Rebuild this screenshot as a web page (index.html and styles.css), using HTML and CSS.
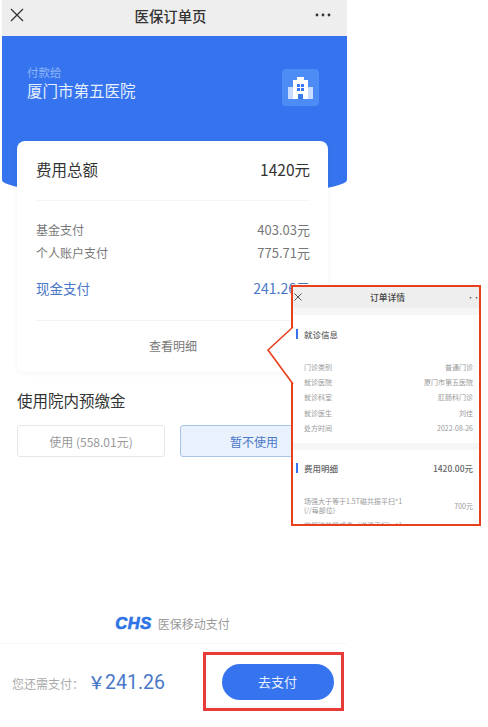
FILE: index.html
```html
<!DOCTYPE html>
<html lang="zh">
<head>
<meta charset="utf-8">
<title>医保订单页</title>
<link rel="stylesheet" href="styles.css">
</head>
<body>
<div class="stage">
  <main class="phone">
    <header class="nav">
      <svg class="nav-close" width="14" height="14" viewBox="0 0 14 14"><path d="M1 1l12 12M13 1L1 13" stroke="#333" stroke-width="1.3" fill="none"/></svg>
      <h1 class="nav-title">医保订单页</h1>
      <svg class="nav-more" width="16" height="4" viewBox="0 0 16 4"><circle cx="2" cy="2" r="1.4" fill="#333"/><circle cx="8" cy="2" r="1.4" fill="#333"/><circle cx="14" cy="2" r="1.4" fill="#333"/></svg>
    </header>
    <section class="hero">
      <div class="payee">
        <div class="payee-label">付款给</div>
        <div class="payee-name">厦门市第五医院</div>
      </div>
      <div class="hospital-tile">
        <svg width="25" height="22" viewBox="0 0 25 22"><path d="M0 10h5v12H0zM20 10h5v12h-5z" fill="#c9dcff"/><path d="M5 3h4V0h7v3h4v19H5z" fill="#fff"/><path d="M9 7h3v3H9zM13 7h3v3h-3zM9 11h3v3H9zM13 11h3v3h-3zM10 17h5v5h-5z" fill="#3a78ee"/></svg>
      </div>
    </section>
    <section class="card">
      <div class="total-row">
        <span>费用总额</span>
        <span>1420元</span>
      </div>
      <div class="breakdown">
        <div class="line"><span>基金支付</span><span class="line-value">403.03元</span></div>
        <div class="line"><span>个人账户支付</span><span class="line-value">775.71元</span></div>
        <div class="line line-cash"><span>现金支付</span><span class="cash-value">241.26元</span></div>
      </div>
      <div class="details-link">查看明细</div>
    </section>
    <section class="prepay">
      <h2 class="prepay-title">使用院内预缴金</h2>
      <div class="prepay-options">
        <div class="option">使用 (558.01元)</div>
        <div class="option option-active">暂不使用</div>
      </div>
    </section>
    <div class="brand">
      <span class="brand-logo">CHS</span>
      <span class="brand-text">医保移动支付</span>
    </div>
    <footer class="paybar">
      <span class="due-label">您还需支付：</span>
      <span class="due-amount"><span class="due-yen">￥</span>241.26</span>
      <div class="pay-highlight"><div class="pay-btn">去支付</div></div>
    </footer>
  </main>

  <aside class="inset">
    <div class="inset-nav">
      <svg class="inset-close" width="8" height="8" viewBox="0 0 8 8"><path d="M.5.5l7 7M7.500.5l-7 7" stroke="#444" stroke-width=".9" fill="none"/></svg>
      <span class="inset-title">订单详情</span>
      <span class="inset-more">••</span>
    </div>
    <div class="inset-section">
      <div class="inset-head"><span>就诊信息</span></div>
      <div class="inset-rows">
        <div class="inset-row"><span>门诊类别</span><span>普通门诊</span></div>
        <div class="inset-row"><span>就诊医院</span><span>厦门市第五医院</span></div>
        <div class="inset-row"><span>就诊科室</span><span>肛肠科门诊</span></div>
        <div class="inset-row"><span>就诊医生</span><span>刘佳</span></div>
        <div class="inset-row"><span>处方时间</span><span>2022-08-26</span></div>
      </div>
    </div>
    <div class="inset-section">
      <div class="inset-head inset-head-fees"><span>费用明细</span><span class="inset-sum">1420.00元</span></div>
      <div class="inset-item"><span>场强大于等于1.5T磁共振平扫*1<br>(//每部位)</span><span>700元</span></div>
      <div class="inset-cut">常规磁共振成像（增强平扫）*1</div>
    </div>
  </aside>
  <svg class="pointer" width="30" height="62" viewBox="0 0 30 62"><path d="M28 1L3 24l25 34" fill="#fff" stroke="#e8401c" stroke-width="1.6"/></svg>
</div>
</body>
</html>
```
FILE: styles.css
```css
* { box-sizing: border-box; }
html, body { margin: 0; padding: 0; background: #fff; }
body { font-family: "Noto Sans CJK SC", "Noto Sans", sans-serif; }
h1, h2 { margin: 0; font-weight: 500; }

.stage { position: relative; width: 488px; height: 727px; overflow: hidden; }
.phone { width: 345px; height: 727px; margin-left: 2px; display: flex; flex-direction: column; }

.nav { height: 36px; flex: none; display: flex; align-items: center; justify-content: space-between; padding: 0 16px 6px 8px; background: #eeeeee; }
.nav-title { font-size: 14.400px; margin-left: 2px; color: #333; }

.hero { height: 161px; flex: none; display: flex; justify-content: space-between; padding: 28px 28px 0 25px; background: #3574ee; border-radius: 0 0 172.5px 172.5px / 0 0 17px 17px; }
.payee-label { font-size: 11.500px; line-height: 16px; color: #8fb4f6; }
.payee-name { font-size: 15.500px; line-height: 21px; color: #e6effd; }
.hospital-tile { width: 37px; height: 37px; margin-top: 5px; display: flex; align-items: center; justify-content: center; border-radius: 4px; background: #4d8bf5; }

.card { flex: none; height: 231px; margin: -56px 19px 0 15px; position: relative; background: #fff; border-radius: 8px; box-shadow: 0 1px 6px rgba(0,0,0,.05); padding: 0 18px 0 19px; display: flex; flex-direction: column; }
.total-row { height: 60px; flex: none; display: flex; align-items: center; justify-content: space-between; padding-bottom: 3px; font-size: 15.500px; color: #333; border-bottom: 1px solid #f5f5f5; }
.breakdown { flex: none; padding-top: 17px; height: 120px; border-bottom: 1px solid #f3f3f3; }
.line { display: flex; justify-content: space-between; font-size: 12px; line-height: 23px; color: #777; }
.line-value { font-size: 13px; }
.line-cash { margin-top: 13px; font-size: 13.500px; color: #4a78c8; }
.cash-value { font-size: 14px; }
.details-link { flex: 1; display: flex; align-items: center; justify-content: center; font-size: 12px; color: #777; padding-bottom: 2px; }

.prepay { flex: none; padding: 17px 0 0 15px; }
.prepay-title { font-size: 15.500px; line-height: 22px; font-weight: 400; color: #333; }
.prepay-options { display: flex; gap: 15px; margin-top: 14px; }
.option { width: 148px; height: 32px; display: flex; align-items: center; justify-content: center; font-size: 12px; color: #999; border: 1px solid #e6e6e6; border-radius: 3px; }
.option-active { color: #4a78c8; background: #e9f1fd; border-color: #a9c3ea; }

.brand { margin-top: auto; height: 40px; display: flex; align-items: center; justify-content: center; gap: 6px; padding-right: 4px; }
.brand-logo { font-family: "Liberation Sans", sans-serif; font-size: 16.500px; line-height: 16px; font-weight: 700; font-style: italic; color: #2f74e6; letter-spacing: .5px; -webkit-text-stroke: .7px #2f74e6; }
.brand-text { font-size: 12px; color: #999; }

.paybar { height: 84px; flex: none; display: flex; align-items: center; padding: 0 0 5px 10px; border-top: 1px solid #f7f7f7; position: relative; }
.due-label { font-size: 12px; color: #aaa; }
.due-amount { font-size: 19.500px; color: #4a78c8; margin-left: 4px; padding-bottom: 4px; font-family: "Roboto", "Noto Sans CJK SC", sans-serif; }
.due-yen { font-size: 17px; font-weight: 500; font-family: "Noto Sans CJK SC", sans-serif; }
.pay-highlight { position: absolute; left: 201px; top: 8px; width: 141px; height: 59px; padding-left: 8px; border: 3px solid #e93a3a; display: flex; align-items: center; justify-content: center; }
.pay-btn { width: 112px; height: 36px; flex: none; border-radius: 18px; background: #3574ee; color: #e8f0ff; font-size: 13px; display: flex; align-items: center; justify-content: center; }

.inset { position: absolute; left: 291px; top: 285px; width: 190px; height: 241px; background: #fff; border: 2px solid #e8401c; overflow: hidden; }
.inset-nav { height: 21px; display: flex; align-items: center; justify-content: center; position: relative; background: #eeeeee; }
.inset-title { font-size: 8.750px; margin-left: 3px; font-weight: 500; color: #444; }
.inset-close { position: absolute; left: 1px; top: 6px; }
.inset-more { position: absolute; right: 0; top: 5px; font-size: 7px; line-height: 10px; color: #444; letter-spacing: -1px; }
.inset-section { padding: 0 6px 7px 3px; border-top: 7px solid #f6f6f6; }
.inset-head { height: 38px; display: flex; align-items: center; font-size: 8.500px; font-weight: 500; color: #666; }
.inset-head::before { content: ""; flex: none; width: 2px; height: 10px; margin-right: 6px; background: #3574ee; }
.inset-head-fees { height: 36px; }
.inset-rows { padding-top: 7px; }
.inset-row { display: flex; justify-content: space-between; font-size: 7px; line-height: 15.200px; color: #999; padding-left: 8px; }
.inset-sum { margin-left: auto; font-size: 8.500px; color: #666; }
.inset-item { display: flex; justify-content: space-between; align-items: center; font-size: 7px; line-height: 9px; color: #999; padding: 11px 0 0 8px; }
.inset-cut { font-size: 7px; line-height: 9px; color: #aaa; padding: 6px 0 0 8px; }

.pointer { position: absolute; left: 265px; top: 326px; }
```
